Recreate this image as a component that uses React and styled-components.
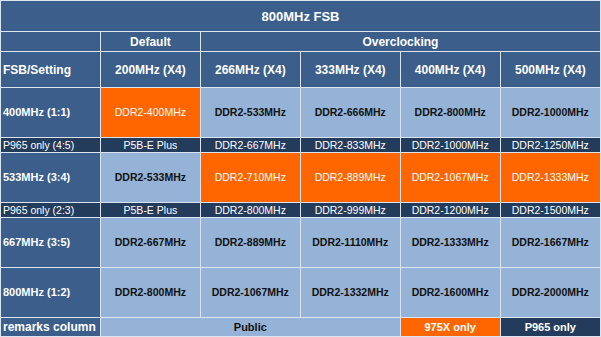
import React from "react";
import styled, { createGlobalStyle } from "styled-components";

const GlobalStyle = createGlobalStyle`
	html, body {
		margin: 0;
		padding: 0;
		background: #ffffff;
	}
	body {
		font-family: "Liberation Sans", Arial, sans-serif;
	}
`;

const colors = {
	blue: "#3b5e8b",
	light: "#95b3d7",
	orange: "#ff6600",
	navy: "#243c5c",
};

const Table = styled.table`
	border-collapse: separate;
	border-spacing: 1px;
	background: #dae5f1;
	table-layout: fixed;
	width: 601px;
`;

const Cell = styled.td`
	padding: 0;
	width: 99px;
	height: ${(p) => p.$h}px;
	background: ${(p) => colors[p.$bg || "light"]};
	color: ${(p) => (p.$dark ? "#111111" : "#ffffff")};
	font-size: ${(p) => p.$size || 10.5}px;
	font-weight: ${(p) => (p.$bold ? "bold" : "normal")};
	text-align: ${(p) => (p.$left ? "left" : "center")};
	padding-left: ${(p) => (p.$left ? "2px" : "0")};
	line-height: 1;
	white-space: nowrap;
	overflow: hidden;
	vertical-align: middle;
`;

const headers = ["200MHz (X4)", "266MHz (X4)", "333MHz (X4)", "400MHz (X4)", "500MHz (X4)"];

const rows = [
	{
		label: "400MHz (1:1)",
		cells: ["DDR2-400MHz", "DDR2-533MHz", "DDR2-666MHz", "DDR2-800MHz", "DDR2-1000MHz"],
		hot: [0],
	},
	{
		label: "P965 only (4:5)",
		small: true,
		cells: ["P5B-E Plus", "DDR2-667MHz", "DDR2-833MHz", "DDR2-1000MHz", "DDR2-1250MHz"],
	},
	{
		label: "533MHz (3:4)",
		cells: ["DDR2-533MHz", "DDR2-710MHz", "DDR2-889MHz", "DDR2-1067MHz", "DDR2-1333MHz"],
		hot: [1, 2, 3, 4],
	},
	{
		label: "P965 only (2:3)",
		small: true,
		cells: ["P5B-E Plus", "DDR2-800MHz", "DDR2-999MHz", "DDR2-1200MHz", "DDR2-1500MHz"],
	},
	{
		label: "667MHz (3:5)",
		cells: ["DDR2-667MHz", "DDR2-889MHz", "DDR2-1110MHz", "DDR2-1333MHz", "DDR2-1667MHz"],
	},
	{
		label: "800MHz (1:2)",
		cells: ["DDR2-800MHz", "DDR2-1067MHz", "DDR2-1332MHz", "DDR2-1600MHz", "DDR2-2000MHz"],
	},
];

function DataRow({ row }) {
	if (row.small) {
		return (
			<tr>
				<Cell $h={14} $bg="navy" $left $size={10.5}>
					{row.label}
				</Cell>
				{row.cells.map((c, i) => (
					<Cell key={i} $h={14} $bg="navy">
						{c}
					</Cell>
				))}
			</tr>
		);
	}
	return (
		<tr>
			<Cell $h={49} $bg="blue" $left $bold $size={11}>
				{row.label}
			</Cell>
			{row.cells.map((c, i) => {
				const hot = row.hot && row.hot.includes(i);
				return (
					<Cell key={i} $h={49} $bg={hot ? "orange" : "light"} $dark={!hot} $bold={!hot}>
						{c}
					</Cell>
				);
			})}
		</tr>
	);
}

export default function App() {
	return (
		<>
			<GlobalStyle />
			<Table>
				<tbody>
					<tr>
						<Cell colSpan={6} $h={30} $bg="blue" $bold $size={13}>
							800MHz FSB
						</Cell>
					</tr>
					<tr>
						<Cell $h={19} $bg="blue" />
						<Cell $h={19} $bg="blue" $bold $size={12}>
							Default
						</Cell>
						<Cell colSpan={4} $h={19} $bg="blue" $bold $size={12}>
							Overclocking
						</Cell>
					</tr>
					<tr>
						<Cell $h={35} $bg="blue" $left $bold $size={12}>
							FSB/Setting
						</Cell>
						{headers.map((h) => (
							<Cell key={h} $h={35} $bg="blue" $bold $size={12}>
								{h}
							</Cell>
						))}
					</tr>
					{rows.map((r) => (
						<DataRow key={r.label} row={r} />
					))}
					<tr>
						<Cell $h={18} $bg="blue" $left $bold $size={12}>
							remarks column
						</Cell>
						<Cell colSpan={3} $h={18} $dark $bold $size={11}>
							Public
						</Cell>
						<Cell $h={18} $bg="orange" $bold $size={11}>
							975X only
						</Cell>
						<Cell $h={18} $bg="navy" $bold $size={11}>
							P965 only
						</Cell>
					</tr>
				</tbody>
			</Table>
		</>
	);
}
